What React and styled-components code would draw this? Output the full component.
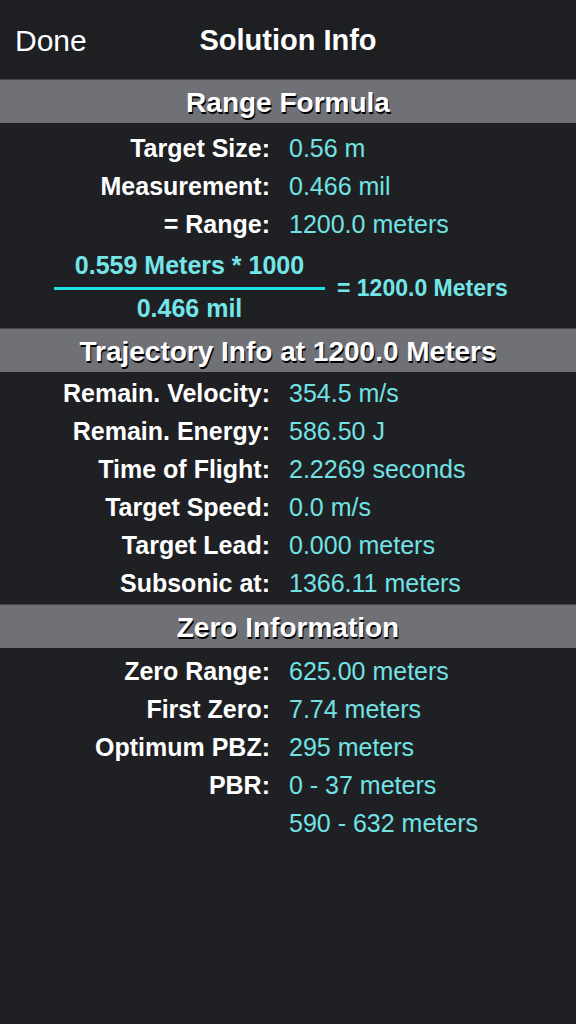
import React from "react";
import styled, { createGlobalStyle } from "styled-components";

const Global = createGlobalStyle`
  html, body { margin: 0; padding: 0; background: #1f2023; }
  body { font-family: "Liberation Sans", Arial, Helvetica, sans-serif; }
`;

const Page = styled.div`
  width: 576px;
  min-height: 1024px;
  background: #1f2023;
  color: #fff;
  font-family: "Liberation Sans", Arial, Helvetica, sans-serif;
`;

const NavBar = styled.div`
  position: relative;
  height: 79px;
  padding-top: 2px;
  box-sizing: border-box;
  display: flex;
  align-items: center;
  justify-content: center;
  background: #1e1f22;
`;

const DoneButton = styled.span`
  position: absolute;
  left: 15px;
  top: 2px;
  line-height: 77px;
  font-size: 30px;
  color: #fff;
`;

const Title = styled.span`
  font-size: 29px;
  font-weight: bold;
  color: #fff;
  line-height: 77px;
`;

const SectionHeader = styled.div`
  box-sizing: border-box;
  height: 44px;
  padding-top: 2px;
  border-top: 1px solid #434448;
  background: #6f7176;
  display: flex;
  align-items: center;
  justify-content: center;
  font-size: 28px;
  font-weight: bold;
  color: #fff;
  text-shadow: 1px 2px 0 #000;
`;

const Rows = styled.div`
  padding: ${(p) => p.$top}px 0 ${(p) => p.$bottom}px;
`;

const Row = styled.div`
  display: grid;
  grid-template-columns: 270px 1fr;
  column-gap: 19px;
  height: 38px;
  align-items: center;
  font-size: 25px;
`;

const Label = styled.span`
  text-align: right;
  font-weight: bold;
  color: #fff;
  white-space: nowrap;
`;

const Value = styled.span`
  color: #72e2e4;
  white-space: nowrap;
`;

const Formula = styled.div`
  height: 85px;
  box-sizing: border-box;
  display: flex;
  align-items: flex-start;
  padding: 7px 0 0 54px;
  gap: 12px;
  color: #74e6e8;
  font-weight: bold;
`;

const Fraction = styled.div`
  width: 271px;
  display: flex;
  flex-direction: column;
  align-items: center;
  font-size: 25px;
`;

const Numerator = styled.div`
  line-height: 30px;
  margin-bottom: 7px;
`;

const Bar = styled.div`
  width: 100%;
  height: 3px;
  background: #1fe0e4;
`;

const Denominator = styled.div`
  line-height: 30px;
  margin-top: 3px;
`;

const Result = styled.div`
  font-size: 23px;
  line-height: 30px;
  margin-top: 23px;
  white-space: nowrap;
`;

const rangeRows = [
  ["Target Size:", "0.56 m"],
  ["Measurement:", "0.466 mil"],
  ["= Range:", "1200.0 meters"],
];

const trajectoryRows = [
  ["Remain. Velocity:", "354.5 m/s"],
  ["Remain. Energy:", "586.50 J"],
  ["Time of Flight:", "2.2269 seconds"],
  ["Target Speed:", "0.0 m/s"],
  ["Target Lead:", "0.000 meters"],
  ["Subsonic at:", "1366.11 meters"],
];

const zeroRows = [
  ["Zero Range:", "625.00 meters"],
  ["First Zero:", "7.74 meters"],
  ["Optimum PBZ:", "295 meters"],
  ["PBR:", "0 - 37 meters"],
  ["", "590 - 632 meters"],
];

const renderRows = (rows) =>
  rows.map(([l, v], i) => (
    <Row key={i}>
      <Label>{l}</Label>
      <Value>{v}</Value>
    </Row>
  ));

export default function App() {
  return (
    <Page>
      <Global />
      <NavBar>
        <DoneButton>Done</DoneButton>
        <Title>Solution Info</Title>
      </NavBar>

      <SectionHeader>Range Formula</SectionHeader>
      <Rows $top={6} $bottom={0}>{renderRows(rangeRows)}</Rows>
      <Formula>
        <Fraction>
          <Numerator>0.559 Meters * 1000</Numerator>
          <Bar />
          <Denominator>0.466 mil</Denominator>
        </Fraction>
        <Result>= 1200.0 Meters</Result>
      </Formula>

      <SectionHeader>Trajectory Info at 1200.0 Meters</SectionHeader>
      <Rows $top={2} $bottom={2}>{renderRows(trajectoryRows)}</Rows>

      <SectionHeader>Zero Information</SectionHeader>
      <Rows $top={4} $bottom={0}>{renderRows(zeroRows)}</Rows>
    </Page>
  );
}
